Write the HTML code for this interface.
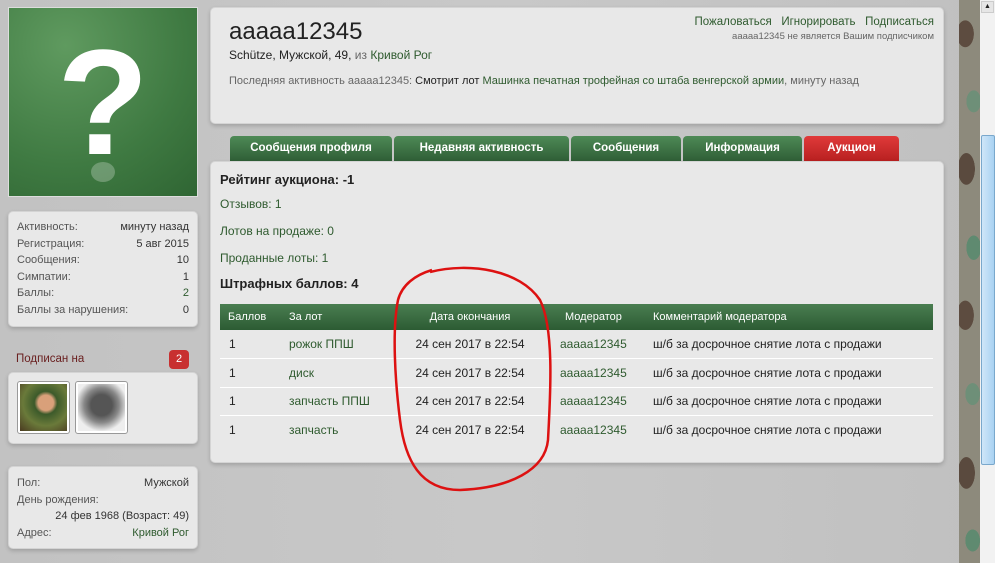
<!DOCTYPE html>
<html><head><meta charset="utf-8"><style>
*{margin:0;padding:0;box-sizing:border-box}
body{width:995px;height:563px;overflow:hidden;position:relative;background:linear-gradient(90deg,#c2c2c2,#c8c8c8 50%,#c0c0c0);font-family:"Liberation Sans","DejaVu Sans",sans-serif;font-size:11px;color:#222}
.a{position:absolute}
.box{position:absolute;background:#e8e8e8;border:1px solid #d4d4d4;border-radius:5px;box-shadow:0 2px 4px rgba(0,0,0,.18)}
.g{color:#2e5a2e}
.row{display:flex;justify-content:space-between;height:16.5px;color:#333}
.row span:first-child{color:#555}
.tab{position:absolute;top:136px;height:25px;background:linear-gradient(#4e8a56,#2f5e36);border-radius:4px 4px 0 0;color:#fff;font-weight:bold;font-size:11.5px;text-align:center;line-height:24px}
table{border-collapse:collapse;position:absolute;left:220px;top:304px;width:713px;font-size:12px;table-layout:fixed}
th{background:linear-gradient(#4a7e51,#2c5b33);color:#fff;font-weight:normal;height:26px;text-align:left;font-size:11px}
td{height:28.5px;border-bottom:1px solid #fff}
</style></head><body>
<div class="a" style="left:8px;top:7px;width:190px;height:190px;background:radial-gradient(circle at 30% 20%,#5f9a5f,#3f7a42 60%,#2f6533);border:1px solid #ddd"></div>
<div class="a" style="left:8px;top:7px;width:190px;height:190px;text-align:center;color:#fff;font-weight:bold;font-size:150px;line-height:190px;font-family:'Liberation Sans',sans-serif">?</div>
<div class="a" style="left:91px;top:162px;width:24px;height:20px;border-radius:50%;background:rgba(255,255,255,.25)"></div>

<div class="box" style="left:8px;top:211px;width:190px;height:116px;padding:9px 8px">
<div class="row"><span>Активность:</span><span>минуту назад</span></div>
<div class="row"><span>Регистрация:</span><span>5 авг 2015</span></div>
<div class="row"><span>Сообщения:</span><span>10</span></div>
<div class="row"><span>Симпатии:</span><span>1</span></div>
<div class="row"><span>Баллы:</span><span class="g">2</span></div>
<div class="row"><span>Баллы за нарушения:</span><span>0</span></div>
</div>
<div class="a" style="left:16px;top:353px;color:#6a2020;font-size:11.5px">Подписан на</div>
<div class="a" style="left:169px;top:350px;width:20px;height:19px;background:#c83030;border-radius:4px;color:#fff;text-align:center;line-height:19px;font-size:11px">2</div>
<div class="box" style="left:8px;top:372px;width:190px;height:72px"></div>
<div class="a" style="left:17px;top:381px;width:53px;height:53px;border:1px solid #999;border-radius:3px;background:#fff;padding:2px"><div style="width:100%;height:100%;background:radial-gradient(circle at 55% 40%,#d9a07a 0 20%,#3c5a2a 30%,#6a7a3a 60%,#4a3a20)"></div></div>
<div class="a" style="left:75px;top:381px;width:53px;height:53px;border:1px solid #999;border-radius:3px;background:#fff;padding:2px"><div style="width:100%;height:100%;background:radial-gradient(circle at 50% 45%,#555 0 30%,#888 50%,#eee 75%)"></div></div>
<div class="box" style="left:8px;top:466px;width:190px;height:83px;padding:10px 8px">
<div class="row"><span>Пол:</span><span>Мужской</span></div>
<div class="row"><span>День рождения:</span><span></span></div>
<div class="row" style="justify-content:flex-end"><span style="color:#333">24 фев 1968 (Возраст: 49)</span></div>
<div class="row"><span>Адрес:</span><span class="g">Кривой Рог</span></div>
</div>

<div class="box" style="left:210px;top:7px;width:734px;height:117px"></div>
<div class="a" style="left:229px;top:18px;font-size:24px;color:#222">aaaaa12345</div>
<div class="a" style="left:229px;top:48px;font-size:12px">Schütze, Мужской, 49, <span style="color:#666">из</span> <span class="g">Кривой Рог</span></div>
<div class="a" style="left:229px;top:75px;font-size:11px;color:#666">Последняя активность aaaaa12345: <span style="color:#222">Смотрит лот</span> <span class="g">Машинка печатная трофейная со штаба венгерской армии</span>, минуту назад</div>
<div class="a g" style="right:61px;top:16px;font-size:11.5px">Пожаловаться&nbsp;&nbsp; Игнорировать&nbsp;&nbsp; Подписаться</div>
<div class="a" style="right:61px;top:31px;font-size:9.5px;color:#666">aaaaa12345 не является Вашим подписчиком</div>

<div class="tab" style="left:230px;width:162px">Сообщения профиля</div>
<div class="tab" style="left:394px;width:175px">Недавняя активность</div>
<div class="tab" style="left:571px;width:110px">Сообщения</div>
<div class="tab" style="left:683px;width:119px">Информация</div>
<div class="tab" style="left:804px;width:95px;background:linear-gradient(#e03a3a,#b82020)">Аукцион</div>

<div class="box" style="left:210px;top:161px;width:734px;height:302px"></div>
<div class="a" style="left:220px;top:172px;font-size:13px;font-weight:bold">Рейтинг аукциона: -1</div>
<div class="a g" style="left:220px;top:197px;font-size:12px">Отзывов: 1</div>
<div class="a g" style="left:220px;top:224px;font-size:12px">Лотов на продаже: 0</div>
<div class="a g" style="left:220px;top:251px;font-size:12px">Проданные лоты: 1</div>
<div class="a" style="left:220px;top:276px;font-size:13px;font-weight:bold">Штрафных баллов: 4</div>
<table>
<colgroup><col style="width:68px"><col style="width:110px"><col style="width:144px"><col style="width:111px"><col></colgroup>
<tr><th style="padding-left:8px">Баллов</th><th style="padding-left:1px">За лот</th><th style="text-align:center">Дата окончания</th><th style="padding-left:23px">Модератор</th><th>Комментарий модератора</th></tr>
<tr><td style="padding-left:9px">1</td><td class="g" style="padding-left:1px">рожок ППШ</td><td style="text-align:center">24 сен 2017 в 22:54</td><td class="g" style="padding-left:18px">aaaaa12345</td><td>ш/б за досрочное снятие лота с продажи</td></tr>
<tr><td style="padding-left:9px">1</td><td class="g" style="padding-left:1px">диск</td><td style="text-align:center">24 сен 2017 в 22:54</td><td class="g" style="padding-left:18px">aaaaa12345</td><td>ш/б за досрочное снятие лота с продажи</td></tr>
<tr><td style="padding-left:9px">1</td><td class="g" style="padding-left:1px">запчасть ППШ</td><td style="text-align:center">24 сен 2017 в 22:54</td><td class="g" style="padding-left:18px">aaaaa12345</td><td>ш/б за досрочное снятие лота с продажи</td></tr>
<tr><td style="padding-left:9px;border:0">1</td><td class="g" style="border:0;padding-left:1px">запчасть</td><td style="text-align:center;border:0">24 сен 2017 в 22:54</td><td class="g" style="border:0;padding-left:18px">aaaaa12345</td><td style="border:0">ш/б за досрочное снятие лота с продажи</td></tr>
</table>
<svg class="a" style="left:0;top:0" width="995" height="563"><path d="M430 272 C470 262 520 270 540 300 C555 330 550 400 548 440 C545 470 510 488 460 490 C420 490 405 460 400 420 C395 380 392 330 398 300 C402 285 415 275 432 270" fill="none" stroke="#d11" stroke-width="2.5"/></svg>

<div class="a" style="left:959px;top:0;width:21px;height:563px;background:
radial-gradient(ellipse 14px 22px at 30% 6%,#5d4c40 60%,transparent 62%),
radial-gradient(ellipse 12px 18px at 70% 18%,#6e8f78 60%,transparent 62%),
radial-gradient(ellipse 14px 26px at 35% 30%,#5a4a3e 60%,transparent 62%),
radial-gradient(ellipse 12px 20px at 70% 44%,#5f8a70 60%,transparent 62%),
radial-gradient(ellipse 14px 24px at 30% 56%,#5d4c40 60%,transparent 62%),
radial-gradient(ellipse 12px 18px at 65% 70%,#6e8f78 60%,transparent 62%),
radial-gradient(ellipse 14px 26px at 35% 84%,#5a4a3e 60%,transparent 62%),
radial-gradient(ellipse 12px 18px at 65% 96%,#5f8a70 60%,transparent 62%),
#8d8a7c"></div>
<div class="a" style="left:980px;top:0;width:15px;height:563px;background:#f2f2f2"></div>
<div class="a" style="left:981px;top:1px;width:13px;height:12px;background:#e6e6e6;border:1px solid #ccc;font-size:7px;text-align:center;line-height:10px">▲</div>
<div class="a" style="left:981px;top:135px;width:14px;height:330px;background:linear-gradient(90deg,#cfe6f8,#a9d2f2);border:1px solid #7aa8cc;border-radius:2px"></div>
</body></html>
